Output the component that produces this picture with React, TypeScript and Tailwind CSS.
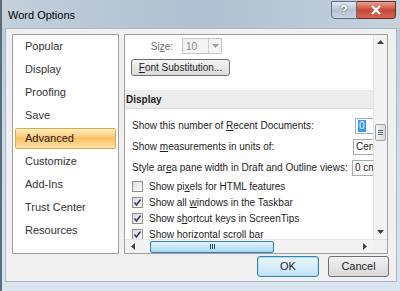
import React from "react";

const font = { fontFamily: '"Liberation Sans", Arial, sans-serif' };

const navItems = [
  "Popular",
  "Display",
  "Proofing",
  "Save",
  "Advanced",
  "Customize",
  "Add-Ins",
  "Trust Center",
  "Resources",
];

const Check = ({ on }: { on: boolean }) => (
  <span className="w-[11px] h-[11px] border border-[#8f8f8f] bg-gradient-to-br from-[#dcdcdc] to-white flex items-center justify-center shrink-0">
    {on && (
      <svg width="9" height="9" viewBox="0 0 9 9">
        <path d="M1.5 4.5 L3.5 7 L7.5 1.5" stroke="#2a3c6e" strokeWidth="1.6" fill="none" />
      </svg>
    )}
  </span>
);

const Row = ({ children }: { children: React.ReactNode }) => (
  <div className="h-[21px] flex items-center pl-[7px] whitespace-nowrap">
    <span>{children}</span>
  </div>
);

const CheckRow = ({ on, children }: { on: boolean; children: React.ReactNode }) => (
  <div className="h-[16px] flex items-center gap-[6px] pl-[7px] whitespace-nowrap shrink-0">
    <Check on={on} />
    <span>{children}</span>
  </div>
);

const App = () => {
  return (
    <div
      className="w-[400px] h-[291px] overflow-hidden flex flex-col bg-gradient-to-b from-[#b7c6d6] via-[#cfdbe7] to-[#dbe5ef] border-l-2 border-[#5d6c7b] text-[10px] text-[#1e1e1e]"
      style={font}
    >
      {/* title bar */}
      <div className="h-[28px] flex items-start justify-between bg-gradient-to-r from-[#c4d0dc] via-[#aebfcf] to-[#c6d3df]">
        <span className="pl-[6px] pt-[7px] text-[11px] text-black">Word Options</span>
        <div className="flex pt-[1px] pr-[4px]">
          <div className="w-[26px] h-[18px] rounded-bl-[4px] border border-[#5e6e80] bg-gradient-to-b from-[#e4ebf2] via-[#b5c3d2] to-[#c9d5e1] flex items-center justify-center text-[12px] font-bold text-white [text-shadow:0_0_2px_#333]">
            ?
          </div>
          <div className="w-[39px] h-[18px] rounded-br-[4px] border border-l-0 border-[#6b2a22] bg-gradient-to-b from-[#e8a090] via-[#c9463a] to-[#d2664f] flex items-center justify-center">
            <svg width="12" height="10" viewBox="0 0 12 10">
              <path d="M2 1 L10 9 M10 1 L2 9" stroke="#fff" strokeWidth="2.4" />
            </svg>
          </div>
        </div>
      </div>

      {/* body */}
      <div className="ml-[3px] mr-[3px] h-[254px] bg-[#f0f0f0] border border-[#a8b8c8] flex flex-col px-[6px] pt-[5px]">
        <div className="flex gap-[5px] h-[220px]">
          {/* nav */}
          <div className="w-[107px] bg-white border border-[#a0a0a0] px-[2px] flex flex-col text-[11px] text-[#333]">
            {navItems.map((item) =>
              item === "Advanced" ? (
                <div
                  key={item}
                  className="h-[21px] my-[1px] flex items-center pl-[9px] border border-[#deaa48] rounded-[2px] bg-gradient-to-b from-[#fff1c4] via-[#fcc064] to-[#fde2a8] text-[#222]"
                >
                  {item}
                </div>
              ) : (
                <div key={item} className="h-[23px] flex items-center pl-[10px]">
                  {item}
                </div>
              )
            )}
          </div>

          {/* content */}
          <div className="w-[264px] bg-white border border-[#a0a0a0] flex flex-col">
            <div className="flex flex-1 min-h-0">
              <div className="flex-1 overflow-hidden flex flex-col">
                <div className="h-[20px] flex items-center pt-[2px] shrink-0">
                  <span className="w-[57px] text-right pr-[9px] text-[#6d6d6d]">
                    Si<u>z</u>e:
                  </span>
                  <div className="w-[40px] h-[16px] border border-[#c4c4c4] bg-[#f4f4f4] flex items-center justify-between text-[#8a8a8a]">
                    <span className="pl-[3px]">10</span>
                    <span className="w-[13px] h-full border-l border-[#d0d0d0] flex items-center justify-center">
                      <svg width="7" height="4" viewBox="0 0 7 4">
                        <path d="M0 0 L7 0 L3.5 4 Z" fill="#a0a0a0" />
                      </svg>
                    </span>
                  </div>
                </div>
                <div className="h-[24px] flex items-center pl-[6px] shrink-0">
                  <div className="w-[99px] h-[17px] border border-[#707070] rounded-[3px] bg-gradient-to-b from-[#f4f4f4] to-[#dcdcdc] flex items-center justify-center whitespace-nowrap">
                    <span>
                      <u>F</u>ont Substitution...
                    </span>
                  </div>
                </div>
                <div className="h-[11px] shrink-0" />
                <div className="h-[19px] bg-[#ececec] border-b border-[#d8d8d8] flex items-center font-bold pl-[1px] shrink-0">
                  Display
                </div>
                <div className="h-[6px] shrink-0" />
                <div className="flex items-center justify-between shrink-0">
                  <Row>
                    Show this number of <u>R</u>ecent Documents:
                  </Row>
                  <div className="w-[18px] h-[16px] border border-[#a5acb5] border-r-0 flex items-center pl-[2px] shrink-0">
                    <span className="bg-[#3399ff] text-white px-[1px] leading-[12px]">0</span>
                  </div>
                </div>
                <div className="flex items-center justify-between shrink-0">
                  <Row>
                    Show <u>m</u>easurements in units of:
                  </Row>
                  <div className="w-[20px] h-[16px] border border-[#a5acb5] border-r-0 flex items-center pl-[2px] overflow-hidden shrink-0">
                    Cen
                  </div>
                </div>
                <div className="flex items-center justify-between shrink-0">
                  <Row>
                    Style ar<u>e</u>a pane width in Draft and Outline views:
                  </Row>
                  <div className="w-[21px] h-[16px] border border-[#a5acb5] border-r-0 flex items-center pl-[2px] overflow-hidden whitespace-nowrap shrink-0">
                    0 cm
                  </div>
                </div>
                <CheckRow on={false}>
                  Show pi<u>x</u>els for HTML features
                </CheckRow>
                <CheckRow on>
                  Show all <u>w</u>indows in the Taskbar
                </CheckRow>
                <CheckRow on>
                  Show s<u>h</u>ortcut keys in ScreenTips
                </CheckRow>
                <CheckRow on>
                  Show horizo<u>n</u>tal scroll bar
                </CheckRow>
              </div>
              {/* vertical scrollbar */}
              <div className="w-[14px] bg-[#f3f3f3] border-l border-[#e4e4e4] flex flex-col items-center justify-between py-[5px]">
                <svg width="7" height="4" viewBox="0 0 7 4">
                  <path d="M0 4 L7 4 L3.5 0 Z" fill="#404040" />
                </svg>
                <div className="flex-1 w-full flex flex-col items-center pt-[80px]">
                  <div className="w-[11px] h-[17px] border border-[#9aa4b0] rounded-[2px] bg-gradient-to-r from-[#f4f4f4] to-[#dadada] flex flex-col items-center justify-center gap-[1px]">
                    <span className="w-[5px] h-[1px] bg-[#606060]" />
                    <span className="w-[5px] h-[1px] bg-[#606060]" />
                    <span className="w-[5px] h-[1px] bg-[#606060]" />
                  </div>
                </div>
                <svg width="7" height="4" viewBox="0 0 7 4">
                  <path d="M0 0 L7 0 L3.5 4 Z" fill="#404040" />
                </svg>
              </div>
            </div>
            {/* horizontal scrollbar */}
            <div className="h-[14px] flex bg-[#f3f3f3] border-t border-[#e4e4e4]">
              <div className="flex-1 flex items-center">
                <span className="w-[16px] flex items-center justify-center">
                  <svg width="4" height="7" viewBox="0 0 4 7">
                    <path d="M4 0 L4 7 L0 3.5 Z" fill="#404040" />
                  </svg>
                </span>
                <div className="ml-[9px] w-[124px] h-[12px] border border-[#3c7fb1] rounded-[2px] bg-gradient-to-b from-[#e3f4fc] to-[#a9d9f2] flex items-center justify-center gap-[1px]">
                  <span className="w-[1px] h-[5px] bg-[#1c4e74]" />
                  <span className="w-[1px] h-[5px] bg-[#1c4e74]" />
                  <span className="w-[1px] h-[5px] bg-[#1c4e74]" />
                </div>
                <span className="ml-auto w-[16px] flex items-center justify-center">
                  <svg width="4" height="7" viewBox="0 0 4 7">
                    <path d="M0 0 L0 7 L4 3.5 Z" fill="#404040" />
                  </svg>
                </span>
              </div>
              <div className="w-[14px] bg-[#f0f0f0]" />
            </div>
          </div>
        </div>

        {/* buttons */}
        <div className="flex justify-end gap-[9px] mt-[2px] pr-[1px] text-[11px]">
          <div className="w-[62px] h-[21px] border border-[#3c7fb1] rounded-[3px] bg-gradient-to-b from-[#eaf6fd] to-[#c4e5f6] flex items-center justify-center shadow-[inset_0_0_0_1px_#a8e0f8]">
            OK
          </div>
          <div className="w-[61px] h-[21px] border border-[#707070] rounded-[3px] bg-gradient-to-b from-[#f2f2f2] to-[#d8d8d8] flex items-center justify-center">
            Cancel
          </div>
        </div>
      </div>
    </div>
  );
};

export default App;
